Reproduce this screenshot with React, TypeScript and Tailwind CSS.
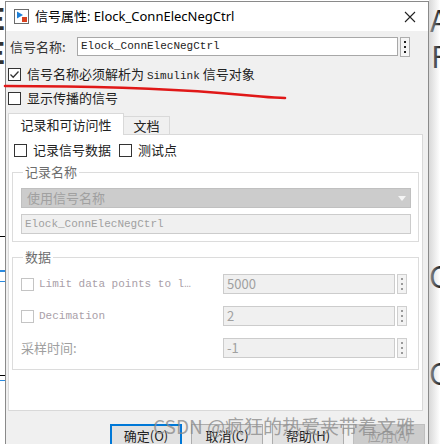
import React from "react";

const cjk = '"Noto Sans CJK SC", "Noto Sans", sans-serif';
const mono = '"Liberation Mono", "Noto Sans CJK SC", monospace';

function Lat({ children }: { children: React.ReactNode }) {
  return <span className="text-[11px]" style={{ fontFamily: mono }}>{children}</span>;
}

function CheckBox({ checked = false, disabled = false }: { checked?: boolean; disabled?: boolean }) {
  return (
    <span
      className={`flex h-[13px] w-[13px] shrink-0 items-center justify-center border bg-white ${
        disabled ? "border-[#c4c4c4]" : "border-[#333333]"
      }`}
    >
      {checked && (
        <svg width="11" height="11" viewBox="0 0 11 11">
          <path d="M1.5 5.5 L4.2 8.2 L9.5 2.5" fill="none" stroke="#333" strokeWidth="1.3" />
        </svg>
      )}
    </span>
  );
}

function Dots({ disabled = false }: { disabled?: boolean }) {
  return (
    <span
      className={`flex h-[20px] w-[10px] shrink-0 flex-col items-center justify-center gap-[3px] border ${
        disabled ? "border-[#cfcfcf] bg-[#f3f3f3]" : "border-[#adadad] bg-[#f5f5f5]"
      }`}
    >
      {[0, 1, 2].map((i) => (
        <span key={i} className={`h-[2px] w-[2px] ${disabled ? "bg-[#9a9a9a]" : "bg-[#222]"}`} />
      ))}
    </span>
  );
}

function Group({ title, className, children }: { title: string; className: string; children: React.ReactNode }) {
  return (
    <div className={`relative ml-[3px] w-[407px] border border-[#dcdcdc] ${className}`}>
      <span className="absolute left-[10px] top-[-10px] bg-white px-[2px] text-[13px] leading-[18px] text-[#6d6d6d]">
        {title}
      </span>
      {children}
    </div>
  );
}

function DataRow({ label, value, box = true, mono: isMono = true }: { label: string; value: string; box?: boolean; mono?: boolean }) {
  return (
    <div className="flex h-[20px] items-center">
      <div className="flex w-[202px] items-center gap-[5px]">
        {box && <CheckBox disabled />}
        <span
          className={isMono ? "text-[11px] text-[#a9a0a8]" : "text-[13px] text-[#a0a0a0]"}
          style={{ fontFamily: isMono ? mono : cjk }}
        >
          {label}
        </span>
      </div>
      <div className="flex h-[20px] w-[172px] items-center border border-[#cccccc] bg-[#f0f0f0] pl-[3px] text-[13px] text-[#a0a0a0]" style={{ fontFamily: cjk }}>
        {value}
      </div>
      <div className="ml-[2px]">
        <Dots disabled />
      </div>
    </div>
  );
}

export default function App() {
  return (
    <div className="relative h-[444px] w-[440px] overflow-hidden bg-white" style={{ fontFamily: cjk }}>
      {/* page behind the dialog */}
      <span className="absolute left-[-13px] top-[2px] text-[30px] leading-none font-bold text-[#333]">E</span>
      <span className="absolute left-[-13px] top-[36px] text-[30px] leading-none font-bold text-[#333]">E</span>
      <span className="absolute left-[0px] top-[236px] h-[1px] w-[6px] bg-black" />
      <span className="absolute left-[0px] top-[270px] h-[2px] w-[6px] bg-[#2b8be0]" />
      <span className="absolute left-[0px] top-[281px] h-[1px] w-[6px] bg-[#2b8be0]" />
      <span className="absolute left-[0px] top-[375px] h-[1px] w-[6px] bg-black" />
      <span className="absolute left-[0px] top-[380px] h-[1px] w-[6px] bg-[#2b8be0]" />
      <span className="absolute left-[430px] top-[4px] text-[30px] leading-none text-[#222]">AU</span>
      <span className="absolute left-[431px] top-[40px] text-[30px] leading-none text-[#222]">F</span>
      <span className="absolute left-[429px] top-[260px] text-[30px] leading-none text-[#222]">C</span>
      <span className="absolute left-[429px] top-[357px] text-[30px] leading-none text-[#222]">C</span>
      <div className="absolute left-[429px] top-0 h-[444px] w-[11px] bg-gradient-to-r from-[#c8c8c8]/70 to-transparent" />

      {/* dialog window */}
      <div className="absolute left-[5px] top-[1px] w-[424px] border border-[#8a8a8a] bg-[#f0f0f0]">
        {/* title bar */}
        <div className="flex h-[29px] items-center bg-white pl-[8px] pr-[12px]">
          <svg width="15" height="15" viewBox="0 0 15 15">
            <rect x="0.5" y="0.5" width="14" height="14" fill="#fff" stroke="#6b6b6b" />
            <path d="M3 2.5 L9 6 L3 9.5 Z" fill="#1e7fd6" />
            <rect x="8" y="8" width="5" height="5" fill="#d9411e" />
          </svg>
          <span className="ml-[6px] text-[13px] text-black" style={{ fontFamily: '"Noto Sans", "Noto Sans CJK SC", sans-serif' }}>
            信号属性: Elock_ConnElecNegCtrl
          </span>
          <svg className="ml-auto" width="12" height="12" viewBox="0 0 12 12">
            <path d="M1 1 L11 11 M11 1 L1 11" stroke="#222" strokeWidth="1.1" />
          </svg>
        </div>

        {/* body */}
        <div className="relative h-[430px]">
          <div className="mt-[6px] flex h-[19px] items-center pl-[4px]">
            <span className="w-[67px] text-[13px] text-[#333]">信号名称:</span>
            <div className="flex h-[19px] w-[321px] items-center border border-[#a8a8a8] bg-white pl-[3px] text-[11px] text-[#222]" style={{ fontFamily: mono }}>
              Elock_ConnElecNegCtrl
            </div>
            <div className="ml-[2px]">
              <Dots />
            </div>
          </div>

          <div className="mt-[6px] flex h-[24px] items-center gap-[6px] pl-[2px] text-[13px] text-[#222]">
            <CheckBox checked />
            <span>
              信号名称必须解析为 <Lat>Simulink</Lat> 信号对象
            </span>
          </div>
          <div className="flex h-[24px] items-center gap-[6px] pl-[2px] text-[13px] text-[#222]">
            <CheckBox />
            <span>显示传播的信号</span>
          </div>

          {/* tabs */}
          <div className="mt-[3px] flex items-end pl-[2px] text-[13px] text-[#222]">
            <div className="relative z-10 flex h-[22px] w-[116px] items-center justify-center border border-b-0 border-[#d9d9d9] bg-white">
              记录和可访问性
            </div>
            <div className="flex h-[19px] w-[46px] items-center justify-center border border-l-0 border-[#d9d9d9] bg-[#f0f0f0]">
              文档
            </div>
          </div>

          {/* tab panel */}
          <div className="-mt-[1px] ml-[2px] h-[277px] w-[415px] border border-[#d9d9d9] bg-white">
            <div className="mt-[5px] flex h-[20px] items-center pl-[5px] text-[13px] text-[#222]">
              <CheckBox />
              <span className="ml-[6px]">记录信号数据</span>
              <span className="ml-[8px]">
                <CheckBox />
              </span>
              <span className="ml-[6px]">测试点</span>
            </div>

            <Group title="记录名称" className="mt-[12px] h-[70px]">
              <div className="ml-[8px] mt-[15px] flex h-[20px] w-[390px] items-center justify-between border border-[#c0c0c0] bg-[#cccccc] pl-[5px] pr-[4px] text-[13px] text-[#a0a0a0]">
                <span>使用信号名称</span>
                <svg width="8" height="5" viewBox="0 0 8 5">
                  <path d="M0 0 L8 0 L4 5 Z" fill="#f4f4f4" />
                </svg>
              </div>
              <div className="ml-[8px] mt-[6px] flex h-[20px] w-[390px] items-center border border-[#cccccc] bg-[#f0f0f0] pl-[3px] text-[11px] text-[#a0a0a0]" style={{ fontFamily: mono }}>
                Elock_ConnElecNegCtrl
              </div>
            </Group>

            <Group title="数据" className="mt-[15px] h-[113px]">
              <div className="ml-[8px] mt-[16px] flex flex-col gap-[12px]">
                <DataRow label="Limit data points to l…" value="5000" />
                <DataRow label="Decimation" value="2" />
                <DataRow label="采样时间:" value="-1" box={false} mono={false} />
              </div>
            </Group>
          </div>

          {/* buttons */}
          <div className="ml-[104px] mt-[13px] flex gap-[9px] text-[13px]">
            <button className="h-[24px] w-[72px] border-2 border-[#0078d7] bg-[#e1e1e1] text-[#222]">确定(O)</button>
            <button className="h-[24px] w-[72px] border border-[#adadad] bg-[#e1e1e1] text-[#222]">取消(C)</button>
            <button className="h-[24px] w-[72px] border border-[#adadad] bg-[#e1e1e1] text-[#222]">帮助(H)</button>
            <button className="h-[24px] w-[72px] border border-[#bfbfbf] bg-[#cccccc] text-[#a0a0a0]">应用(A)</button>
          </div>
        </div>
      </div>

      {/* watermark */}
      <span className="pointer-events-none absolute left-[153px] top-[412px] text-[19px] leading-[28px] whitespace-nowrap text-[#8c8c8c]/80">
        CSDN @疯狂的热爱夹带着文雅
      </span>

      {/* red marker underline */}
      <svg className="pointer-events-none absolute left-0 top-0" width="440" height="444">
        <path d="M5 86 C 90 86, 170 89, 220 93 S 270 98, 285 98" fill="none" stroke="#e01818" strokeWidth="2.6" strokeLinecap="round" />
      </svg>
    </div>
  );
}
